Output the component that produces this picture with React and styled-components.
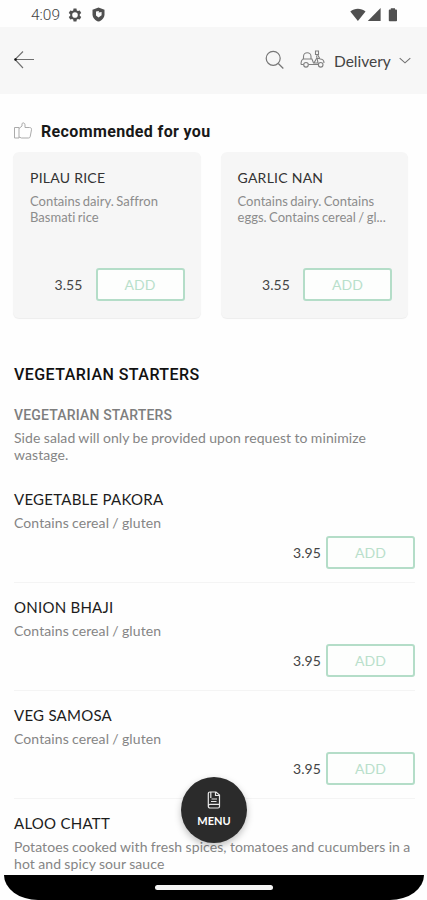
import React from "react";
import styled, { createGlobalStyle } from "styled-components";

const GlobalStyle = createGlobalStyle`
  * {
    box-sizing: border-box;
  }
  body {
    margin: 0;
    background: #fff;
    font-family: Lato, "Liberation Sans", sans-serif;
  }
`;

const Screen = styled.div`
  position: relative;
  width: 427px;
  height: 900px;
  overflow: hidden;
  background-color: #fefefe;
`;

const StatusBar = styled.div`
  display: flex;
  align-items: center;
  justify-content: space-between;
  height: 27px;
  padding: 2px 29px 0 31px;
`;

const StatusGroup = styled.div`
  display: flex;
  align-items: center;
  gap: ${(props) => props.gap};
`;

const Clock = styled.span`
  width: 29px;
  margin-right: -2px;
  font-family: Roboto, sans-serif;
  font-size: 15.5px;
  font-weight: 300;
  color: #444;
`;

const Header = styled.header`
  display: flex;
  align-items: center;
  justify-content: space-between;
  height: 67px;
  padding: 0 16px 2px 13px;
  background-color: #f7f7f7;
`;

const HeaderActions = styled.div`
  display: flex;
  align-items: center;
`;

const Delivery = styled.span`
  margin: 3px 8px 0 9px;
  width: 57px;
  font-size: 15.5px;
  line-height: 20px;
  letter-spacing: 0;
  color: #444;
`;

const Recommended = styled.div`
  display: flex;
  align-items: center;
  gap: 8px;
  height: 58px;
  padding: 16px 13px 0;
`;

const RecommendedTitle = styled.h2`
  margin: 0;
  font-family: Roboto, sans-serif;
  font-size: 16px;
  font-weight: 700;
  letter-spacing: 0.36px;
  white-space: nowrap;
  color: #181818;
`;

const Cards = styled.div`
  display: flex;
  gap: 20px;
  padding: 0 19px 0 13px;
`;

const Card = styled.div`
  display: flex;
  flex-direction: column;
  flex: 1;
  height: 166px;
  padding: 17px 16px 17px 17px;
  border-radius: 6px;
  background-color: #f6f6f6;
  box-shadow: 0 1px 1px rgba(0, 0, 0, 0.07);
`;

const Name = styled.h3`
  margin: 0;
  font-size: ${(props) => (props.small ? "14px" : "15px")};
  font-weight: 400;
  line-height: 18px;
  letter-spacing: 0.25px;
  color: ${(props) => (props.small ? "#333" : "#1c1c1c")};
`;

const CardText = styled.p`
  margin: 6px 0 0;
  font-size: 13px;
  line-height: 16px;
  letter-spacing: 0.02px;
  word-spacing: -0.9px;
  white-space: pre;
  color: #8c8c8c;
`;

const Buy = styled.div`
  display: flex;
  align-items: center;
  justify-content: flex-end;
  gap: ${(props) => props.gap || "5px"};
  margin-top: auto;
`;

const Price = styled.span`
  font-size: 14px;
  letter-spacing: 0.1px;
  color: #444;
`;

const AddButton = styled.button`
  width: 89px;
  height: 33px;
  padding: 0;
  border: 2px solid #b4ddc8;
  border-radius: 3px;
  background-color: #fdfefd;
  font-family: inherit;
  font-size: 14px;
  line-height: 18px;
  color: #b9e0cb;
`;

const Section = styled.section`
  padding: 46px 12px 0 14px;
`;

const SectionTitle = styled.h2`
  margin: 0;
  font-family: Roboto, sans-serif;
  font-size: 16px;
  font-weight: 500;
  line-height: 22px;
  letter-spacing: 0.45px;
  color: #111;
`;

const SubTitle = styled.h4`
  margin: 19px 0 0;
  font-family: Roboto, sans-serif;
  font-size: 14px;
  font-weight: 500;
  line-height: 20px;
  letter-spacing: 0.17px;
  color: #7e7e7e;
`;

const Text = styled.p`
  margin: 4px 0 0;
  font-size: 14px;
  line-height: 17px;
  letter-spacing: 0.09px;
  word-spacing: -0.4px;
  white-space: pre;
  color: #858585;
`;

const Item = styled.div`
  display: flex;
  flex-direction: column;
  height: 108px;
  padding: 15px 0 13px;
  border-bottom: 1px solid #f4f4f4;

  ${Text} {
    margin-top: 6px;
  }
`;

const Items = styled.div`
  margin-top: 12px;
`;

const MenuButton = styled.button`
  position: absolute;
  left: 181px;
  top: 777px;
  display: flex;
  flex-direction: column;
  align-items: center;
  gap: 5px;
  width: 66px;
  height: 66px;
  padding: 14px 0 0;
  border: 0;
  border-radius: 50%;
  background-color: #2b2b2b;
  box-shadow: 0 3px 7px rgba(0, 0, 0, 0.25);
  font-family: inherit;
  font-size: 11px;
  font-weight: 700;
  line-height: 14px;
  color: #fff;
`;

const NavBar = styled.div`
  position: absolute;
  left: 4px;
  right: 3px;
  bottom: 0;
  display: flex;
  justify-content: center;
  height: 25px;
  padding-top: 10px;
  border-radius: 0 0 34px 34px / 0 0 25px 25px;
  background-color: #000;
`;

const NavMask = styled.div`
  position: absolute;
  left: 0;
  right: 0;
  bottom: 0;
  height: 25px;
  background-color: #fefefe;
`;

const HomeIndicator = styled.div`
  width: 118px;
  height: 5px;
  border-radius: 3px;
  background-color: #f5f5f5;
`;

const GearIcon = () => (
  <svg width="14" height="14" viewBox="0 0 24 24" fill="#505050">
    <path
      fillRule="evenodd"
      d="M9.5 1h5l.6 3.2 2 1.1 3.1-1.1 2.5 4.4L20.200 10.700v2.600l2.500 2.100-2.500 4.400-3.100-1.100-2 1.100-.6 3.200h-5l-.6-3.200-2-1.100-3.100 1.100-2.500-4.400 2.500-2.100v-2.600L1.300 8.600l2.500-4.400 3.100 1.100 2-1.100zM12 7.200a4.800 4.800 0 1 0 0 9.600 4.800 4.800 0 0 0 0-9.600z"
    />
  </svg>
);

const ShieldIcon = () => (
  <svg width="13" height="15" viewBox="0 0 13 15">
    <path d="M6.500 .4L12.500 2.700v4.500c0 3.600-2.500 6.200-6 7.400C3 13.400.5 10.800.5 7.200V2.700z" fill="#505050" />
    <path d="M4 4.600l3-.6-.4 1.500 3-.5v3.200L6.500 10.500 4 8.600z" fill="#fafafa" />
  </svg>
);

const SignalIcons = () => (
  <svg width="48" height="14" viewBox="0 0 48 14" fill="#505050">
    <path d="M.3 3.400C4.800-.1 11-.1 15.500 3.400L7.900 13z" />
    <path d="M30.600 0v13H17.800z" />
    <path d="M40.800.2h4.200v1.400h1.200c.5 0 .8.300.8.800v10c0 .5-.3.800-.8.800h-6.600c-.5 0-.8-.3-.8-.8v-10c0-.5.3-.8.8-.8h1.200z" />
  </svg>
);

const BackIcon = () => (
  <svg width="22" height="20" viewBox="0 0 22 20" fill="none" stroke="#707070" strokeWidth="1.1">
    <path d="M21 9.500H2M10 1.500L2 9.500l8 8.500" />
    <circle cx="2.500" cy="9.500" r=".7" fill="#111" stroke="#111" />
  </svg>
);

const SearchIcon = () => (
  <svg width="20" height="20" viewBox="0 0 20 20" fill="none" stroke="#777" strokeWidth="1.200">
    <circle cx="8.200" cy="8.300" r="7" />
    <path d="M13.300 13.500L18.300 18.500" />
  </svg>
);

const ScooterIcon = () => (
  <svg width="25" height="19" viewBox="0 0 25 19" fill="none" stroke="#808080" strokeWidth="1.100">
    <path d="M3.500 9V6.500C3.500 1.500 11 1.500 11 6.500V9M2.500 9h9.500l1.500 4H18L16.500 5.500M1 14.500C1 11 2 9 4 9M1 14.500h2.500M8.500 14.500H18" />
    <path d="M15.500 1h3v3.500h-3zM17.500 4.500l2.500 4.500c2.500 0 4 1.500 4 4M14 13l2.500-4.500h3" />
    <circle cx="6" cy="14.800" r="2.300" />
    <circle cx="20.700" cy="14.800" r="2.300" />
  </svg>
);

const ChevronIcon = () => (
  <svg width="12" height="8" viewBox="0 0 12 8" fill="none" stroke="#707070" strokeWidth="1.100">
    <path d="M.7 2.200L6 6.800l5.300-4.600" />
  </svg>
);

const ThumbIcon = () => (
  <svg width="20" height="18" viewBox="0 0 20 18" fill="none" stroke="#ababab" strokeWidth="1" strokeLinejoin="round">
    <path d="M1.500 5.500h4.500v10.500h-4.500zM6 6.500l3-2.500V2c0-1.600 3-1.600 3 .8V5.500h4.500c1.500 0 2.300 1 2 2.200l-1.300 7c-.2.900-.8 1.300-1.700 1.300H8.500l-2.500-1" />
  </svg>
);

const MenuIcon = () => (
  <svg width="14" height="18" viewBox="0 0 14 18" fill="none" stroke="#e8e8e8" strokeWidth="1.200">
    <path d="M3 1h6l3.500 3v11.500c0 .8-.7 1.500-1.500 1.500H3c-1 0-1.700-.7-1.700-1.700V2.700C1.300 1.700 2 1 3 1zM8.500 1v3.500h4M1.300 15c0-1 .7-1.700 1.700-1.700h9.500M4.500 8h5.500M4 10.500h5.500M3.800 1v6" />
  </svg>
);

const recommended = [
  { name: "PILAU RICE", text: "Contains dairy. Saffron\nBasmati rice", price: "3.55" },
  { name: "GARLIC NAN", text: "Contains dairy. Contains\neggs. Contains cereal / gl...", price: "3.55" },
];

const starters = [
  { name: "VEGETABLE PAKORA", text: "Contains cereal / gluten", price: "3.95" },
  { name: "ONION BHAJI", text: "Contains cereal / gluten", price: "3.95" },
  { name: "VEG SAMOSA", text: "Contains cereal / gluten", price: "3.95" },
  {
    name: "ALOO CHATT",
    text: "Potatoes cooked with fresh spices, tomatoes and cucumbers in a\nhot and spicy sour sauce",
  },
];

export default function App() {
  return (
    <Screen>
      <GlobalStyle />
      <StatusBar>
        <StatusGroup gap="10px">
          <Clock>4:09</Clock>
          <GearIcon />
          <ShieldIcon />
        </StatusGroup>
        <SignalIcons />
      </StatusBar>

      <Header>
        <BackIcon />
        <HeaderActions>
          <StatusGroup gap="15px">
            <SearchIcon />
            <ScooterIcon />
          </StatusGroup>
          <Delivery>Delivery</Delivery>
          <ChevronIcon />
        </HeaderActions>
      </Header>

      <Recommended>
        <ThumbIcon />
        <RecommendedTitle>Recommended for you</RecommendedTitle>
      </Recommended>

      <Cards>
        {recommended.map((item) => (
          <Card key={item.name}>
            <Name small>{item.name}</Name>
            <CardText>{item.text}</CardText>
            <Buy gap="13px">
              <Price>{item.price}</Price>
              <AddButton>ADD</AddButton>
            </Buy>
          </Card>
        ))}
      </Cards>

      <Section>
        <SectionTitle>VEGETARIAN STARTERS</SectionTitle>
        <SubTitle>VEGETARIAN STARTERS</SubTitle>
        <Text>{"Side salad will only be provided upon request to minimize\nwastage."}</Text>
        <Items>
          {starters.map((item) => (
            <Item key={item.name}>
              <Name>{item.name}</Name>
              <Text>{item.text}</Text>
              {item.price && (
                <Buy>
                  <Price>{item.price}</Price>
                  <AddButton>ADD</AddButton>
                </Buy>
              )}
            </Item>
          ))}
        </Items>
      </Section>

      <MenuButton>
        <MenuIcon />
        MENU
      </MenuButton>
      <NavMask />
      <NavBar>
        <HomeIndicator />
      </NavBar>
    </Screen>
  );
}
